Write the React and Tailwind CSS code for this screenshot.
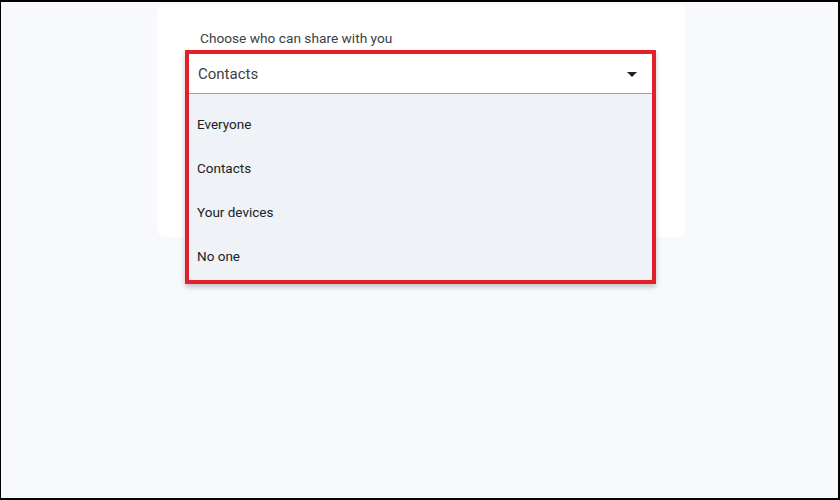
import React from "react";

const options = ["Everyone", "Contacts", "Your devices", "No one"];

export default function App() {
  return (
    <div className="w-[840px] h-[500px] bg-[#f7f9fc] border-t-2 border-l border-r-2 border-b-2 border-black font-['Roboto',sans-serif] overflow-hidden">
      <div className="pl-[156px] pt-[2px]">
        {/* settings card */}
        <div className="w-[528px] h-[233px] bg-white rounded-lg pl-[28px] pt-[26px]">
          <p className="ml-[15px] text-[13.7px] leading-4 text-[#3c4043]">
            Choose who can share with you
          </p>

          {/* open dropdown, highlighted */}
          <div className="mt-[4px] w-[471px] border-4 border-[#e2202b] shadow-[0_3px_5px_rgba(0,0,0,0.22)]">
            <div className="h-10 bg-white border-b border-[#a3a3a3] flex items-center justify-between pl-[9px] pr-[15px] pt-[2px]">
              <span className="text-[15px] text-[#3c4043]">Contacts</span>
              <svg width="10" height="5" viewBox="0 0 10 5">
                <path d="M0 0h10L5 5z" fill="#202124" />
              </svg>
            </div>
            <ul className="bg-[#eff2f7] pt-[8px] pb-[2px]">
              {options.map((o) => (
                <li key={o} className="h-11 flex items-center pl-[8px] text-[13.5px] text-[#202124]">
                  {o}
                </li>
              ))}
            </ul>
          </div>
        </div>
      </div>
    </div>
  );
}
